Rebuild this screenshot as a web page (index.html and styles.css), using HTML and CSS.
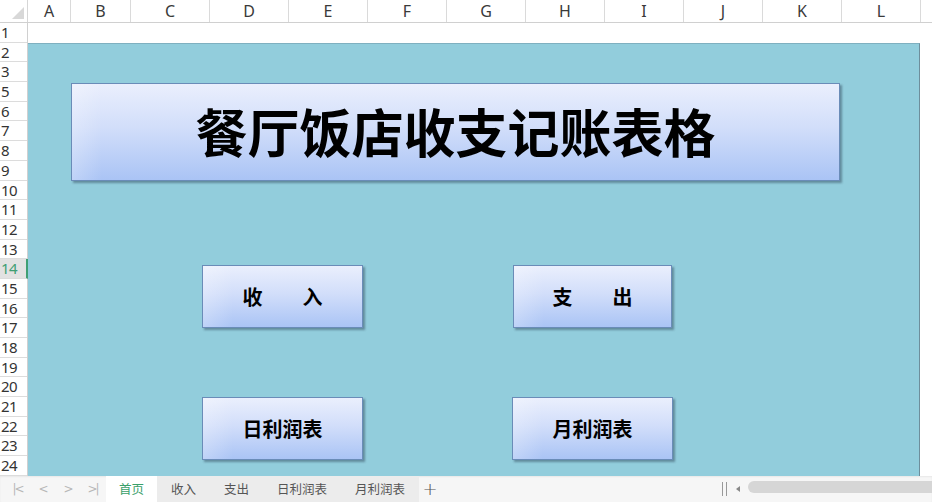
FILE: index.html
```html
<!DOCTYPE html>
<html lang="zh-CN">
<head>
<meta charset="utf-8">
<title>餐厅饭店收支记账表格</title>
<link rel="stylesheet" href="styles.css">
</head>
<body>
<div class="app">
  <div class="colheads">
    <div class="corner"><span class="corner-tri"></span></div>
    <div class="ch w-a">A</div>
    <div class="ch w-b">B</div>
    <div class="ch w-c">C</div>
    <div class="ch w-c">D</div>
    <div class="ch w-c">E</div>
    <div class="ch w-c">F</div>
    <div class="ch w-c">G</div>
    <div class="ch w-c">H</div>
    <div class="ch w-c">I</div>
    <div class="ch w-c">J</div>
    <div class="ch w-c">K</div>
    <div class="ch w-l">L</div>
    <div class="ch w-rest"></div>
  </div>
  <div class="body">
    <div class="rowheads">
      <div class="rh">1</div>
      <div class="rh">2</div>
      <div class="rh">3</div>
      <div class="rh">5</div>
      <div class="rh">6</div>
      <div class="rh">7</div>
      <div class="rh">8</div>
      <div class="rh">9</div>
      <div class="rh">10</div>
      <div class="rh">11</div>
      <div class="rh">12</div>
      <div class="rh">13</div>
      <div class="rh rh-active">14</div>
      <div class="rh">15</div>
      <div class="rh">16</div>
      <div class="rh">17</div>
      <div class="rh">18</div>
      <div class="rh">19</div>
      <div class="rh">20</div>
      <div class="rh">21</div>
      <div class="rh">22</div>
      <div class="rh">23</div>
      <div class="rh">24</div>
    </div>
    <div class="sheet">
      <div class="row1"></div>
      <div class="lower">
        <div class="canvas">
          <div class="shape title">餐厅饭店收支记账表格</div>
          <div class="shape btn btn-income">收　　入</div>
          <div class="shape btn btn-expense">支　　出</div>
          <div class="shape btn btn-daily">日利润表</div>
          <div class="shape btn btn-monthly">月利润表</div>
        </div>
        <div class="rest"></div>
      </div>
    </div>
  </div>
  <div class="tabbar">
    <div class="navs">
      <span class="nav">|&lt;</span>
      <span class="nav">&lt;</span>
      <span class="nav">&gt;</span>
      <span class="nav">&gt;|</span>
    </div>
    <div class="tabs">
      <div class="tab tab-active">首页</div>
      <div class="tab">收入</div>
      <div class="tab">支出</div>
      <div class="tab">日利润表</div>
      <div class="tab">月利润表</div>
    </div>
    <div class="plus">+</div>
    <div class="spacer"></div>
    <div class="splitter"></div>
    <div class="scroll-left"></div>
    <div class="scrollbar"></div>
  </div>
</div>
</body>
</html>
```

FILE: styles.css
```css
* { box-sizing: border-box; }
html, body { margin: 0; padding: 0; }
body {
  width: 932px;
  height: 502px;
  overflow: hidden;
  background: #ffffff;
  font-family: "Noto Sans", "Noto Sans CJK SC", sans-serif;
}
.app {
  width: 932px;
  height: 502px;
  display: flex;
  flex-direction: column;
}

/* column headers */
.colheads {
  display: flex;
  height: 23px;
  flex: none;
  border-bottom: 1px solid #d0d0d0;
  background: #ffffff;
}
.corner {
  width: 28px;
  flex: none;
  border-right: 1px solid #d6d6d6;
  position: relative;
}
.corner-tri {
  position: absolute;
  right: 3px;
  bottom: 3px;
  width: 0;
  height: 0;
  border-left: 12px solid transparent;
  border-bottom: 12px solid #d8d8d8;
}
.ch {
  flex: none;
  border-right: 1px solid #dadada;
  display: flex;
  align-items: center;
  justify-content: center;
  font-size: 16px;
  color: #3a3a3a;
  line-height: 1;
  padding-bottom: 1px;
}
.w-a { width: 43px; }
.w-b { width: 60px; }
.w-c { width: 79px; }
.w-l { width: 79px; }
.w-rest { flex: 1; border-right: none; }

/* body */
.body {
  display: flex;
  flex: 1;
  min-height: 0;
}
.rowheads {
  width: 28px;
  flex: none;
  display: flex;
  flex-direction: column;
  border-right: 1px solid #d0d0d0;
}
.rh {
  height: 19.7px;
  flex: none;
  border-bottom: 1px solid #dcdcdc;
  font-size: 15px;
  line-height: 18px;
  color: #333333;
  padding-left: 1px;
  letter-spacing: -0.5px;
  overflow: hidden;
}
.rh-active {
  background: #e2e2e2;
  color: #3f9f74;
  border-right: 2px solid #3f9f74;
  margin-right: -1px;
}

.sheet {
  flex: 1;
  display: flex;
  flex-direction: column;
}
.row1 {
  height: 20px;
  flex: none;
  background: #ffffff;
}
.lower {
  flex: 1;
  display: flex;
}
.canvas {
  width: 892px;
  flex: none;
  position: relative;
  background: #92cddc;
  border-top: 1px solid #7fb0c0;
  border-right: 1px solid #6e8e9c;
}
.rest {
  flex: 1;
  background: #ffffff;
}

/* shapes */
.shape {
  position: absolute;
  display: flex;
  align-items: center;
  justify-content: center;
  border: 1px solid #6a8cb8;
  background: linear-gradient(to bottom, #eaeffd 0%, #d2defa 45%, #aac4f5 100%);
  box-shadow: 2px 2px 2px rgba(40, 60, 80, 0.45);
  color: #000000;
  font-family: "Noto Sans CJK SC", sans-serif;
  font-weight: 700;
}
.shape::before {
  content: "";
  position: absolute;
  left: 0;
  top: 0;
  bottom: 0;
  width: 30px;
  background: linear-gradient(to right, rgba(255,255,255,0.25), rgba(255,255,255,0));
  pointer-events: none;
}
.title {
  left: 43px;
  top: 39px;
  width: 769px;
  height: 98px;
  font-size: 52px;
  line-height: 1;
  padding-bottom: 2px;
}
.btn {
  width: 161px;
  height: 63px;
  font-size: 20px;
  line-height: 1;
}
.btn-income { left: 174px; top: 221px; }
.btn-expense { left: 485px; top: 221px; width: 159px; }
.btn-daily { left: 174px; top: 353px; }
.btn-monthly { left: 484px; top: 353px; }

/* tab bar */
.tabbar {
  height: 26px;
  flex: none;
  display: flex;
  align-items: stretch;
  background: #f6f6f6;
  box-shadow: inset 0 1px 2px rgba(0,0,0,0.06);
  font-family: "Noto Sans CJK SC", sans-serif;
}
.navs {
  width: 106px;
  flex: none;
  display: flex;
  align-items: center;
  padding-left: 5px;
}
.nav {
  width: 25px;
  font-family: "DejaVu Sans", sans-serif;
  font-size: 12px;
  color: #b8b8b8;
  text-align: center;
  letter-spacing: -2px;
}
.tabs {
  display: flex;
  background: #ececec;
}
.tab {
  display: flex;
  align-items: center;
  justify-content: center;
  padding: 0 14px 1px;
  font-size: 12.5px;
  color: #555555;
}
.tab-active {
  background: #ffffff;
  color: #3aa06a;
  padding: 0 13px 1px;
}
.plus {
  width: 22px;
  display: flex;
  align-items: center;
  justify-content: center;
  font-family: "DejaVu Sans", sans-serif;
  font-size: 18px;
  font-weight: 300;
  color: #555555;
  padding-bottom: 2px;
}
.spacer { flex: 1; }
.splitter {
  width: 5px;
  margin: 6px 9px 6px 0;
  border-left: 1px solid #999;
  border-right: 1px solid #999;
}
.scroll-left {
  width: 0;
  height: 0;
  align-self: center;
  margin-right: 8px;
  border-top: 3px solid transparent;
  border-bottom: 3px solid transparent;
  border-right: 4px solid #888;
}
.scrollbar {
  width: 184px;
  margin: 5px 0 9px;
  background: #d6d6d6;
  border-radius: 6px 0 0 6px;
}
```
